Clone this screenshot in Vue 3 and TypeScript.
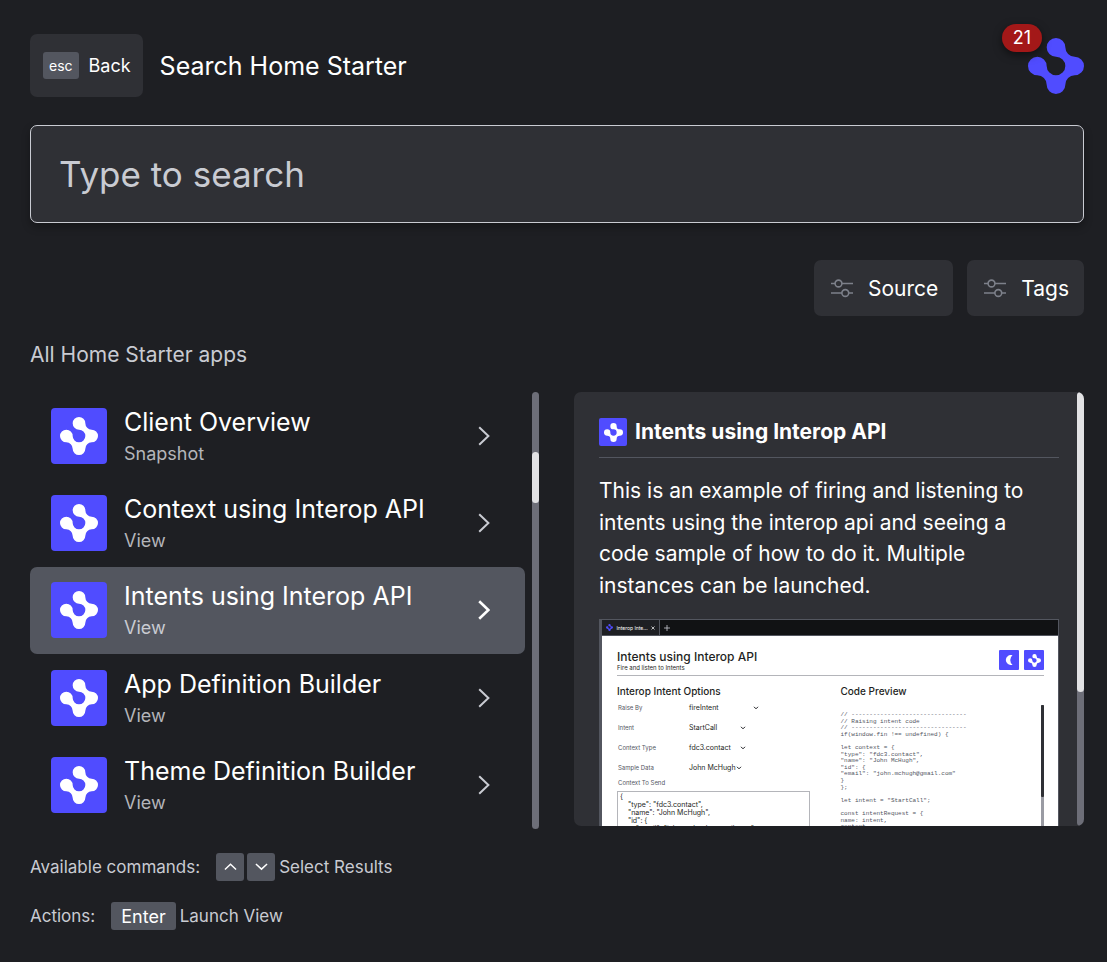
<script setup lang="ts">
import { computed, ref } from 'vue'

interface AppEntry {
  name: string
  kind: string
}

const LOGO =
  'M4 1A1 1 0 0 0 5 2A1 1 0 0 1 5 4A1 1 0 0 0 4 5A1 1 0 0 1 2 5A1 1 0 0 0 1 4A1 1 0 1 1 2 3A1 1 0 1 0 3 2A1 1 0 1 1 4 1Z'

const apps: AppEntry[] = [
  { name: 'Client Overview', kind: 'Snapshot' },
  { name: 'Context using Interop API', kind: 'View' },
  { name: 'Intents using Interop API', kind: 'View' },
  { name: 'App Definition Builder', kind: 'View' },
  { name: 'Theme Definition Builder', kind: 'View' },
]

const query = ref('')
const selected = ref(2)
const current = computed(() => apps[selected.value])
const filters = ['Source', 'Tags']

const options = [
  { label: 'Raise By', value: 'fireIntent', size: 'wide' },
  { label: 'Intent', value: 'StartCall', size: 'medium' },
  { label: 'Context Type', value: 'fdc3.contact', size: 'medium' },
  { label: 'Sample Data', value: 'John McHugh', size: 'narrow' },
]

const contextJson = `{
    "type": "fdc3.contact",
    "name": "John McHugh",
    "id": {
        "email": "john.mchugh@gmail.com"
    }
}`

const code = `// --------------------------------
// Raising intent code
// --------------------------------
if(window.fin !== undefined) {

let context = {
"type": "fdc3.contact",
"name": "John McHugh",
"id": {
"email": "john.mchugh@gmail.com"
}
};

let intent = "StartCall";

const intentRequest = {
name: intent,
context
};`
</script>

<template>
  <div class="page">
    <header class="header">
      <button class="back" type="button"><kbd class="esc">esc</kbd><span>Back</span></button>
      <h1 class="title">Search Home Starter</h1>
      <div class="brand">
        <svg class="brand-logo" viewBox="0 0 6 6" aria-hidden="true"><path :d="LOGO" /></svg>
        <span class="badge">21</span>
      </div>
    </header>

    <input v-model="query" class="search" type="text" placeholder="Type to search" aria-label="Type to search" />

    <div class="filters">
      <button v-for="f in filters" :key="f" class="filter" type="button">
        <svg class="sliders" viewBox="0 0 22 20" aria-hidden="true">
          <path d="M0 5.5H4M11 5.5H22M0 15H11M18 15H22" />
          <circle cx="7.5" cy="5.5" r="3.4" />
          <circle cx="14.3" cy="15" r="3.4" />
        </svg>
        <span>{{ f }}</span>
      </button>
    </div>

    <h2 class="caption">All Home Starter apps</h2>

    <main class="main">
      <section class="results">
        <div class="list">
          <button
            v-for="(app, i) in apps"
            :key="app.name"
            type="button"
            class="row"
            :class="{ active: i === selected }"
            @click="selected = i"
          >
            <span class="tile"><svg viewBox="0 0 6 6" aria-hidden="true"><path :d="LOGO" /></svg></span>
            <span class="row-text">
              <span class="row-name">{{ app.name }}</span>
              <span class="row-kind">{{ app.kind }}</span>
            </span>
            <svg class="chevron" viewBox="0 0 12 20" aria-hidden="true"><path d="M1.2 1.2L10.4 10L1.2 18.8" /></svg>
          </button>
        </div>
        <div class="track"><div class="thumb"></div></div>
      </section>

      <section class="detail">
        <div class="detail-body">
          <div class="detail-head">
            <span class="tile small"><svg viewBox="0 0 6 6" aria-hidden="true"><path :d="LOGO" /></svg></span>
            <h3 class="detail-title">{{ current.name }}</h3>
          </div>
          <p class="description">
            This is an example of firing and listening to intents using the interop api and seeing a code sample of how
            to do it. Multiple instances can be launched.
          </p>

          <div class="preview">
            <div class="tabs">
              <div class="tab">
                <svg class="tab-logo" viewBox="0 0 6 6" aria-hidden="true"><path :d="LOGO" /></svg>
                <span>Interop Inte...</span>
                <svg class="tab-close" viewBox="0 0 4 4" aria-hidden="true"><path d="M.5 .5L3.5 3.5M3.5 .5L.5 3.5" /></svg>
              </div>
              <svg class="tab-add" viewBox="0 0 6 6" aria-hidden="true"><path d="M3 0V6M0 3H6" /></svg>
            </div>
            <div class="sheet">
              <div class="sheet-head">
                <div>
                  <div class="sheet-title">Intents using Interop API</div>
                  <div class="sheet-sub">Fire and listen to Intents</div>
                </div>
                <div class="sheet-icons">
                  <span class="mini">
                    <svg class="moon" viewBox="0 0 8 10" aria-hidden="true"><path d="M7.5 .3A5 5 0 1 0 7.5 9.7A6 6 0 0 1 7.5 .3Z" /></svg>
                  </span>
                  <span class="mini"><svg viewBox="0 0 6 6" aria-hidden="true"><path :d="LOGO" /></svg></span>
                </div>
              </div>
              <div class="sheet-cols">
                <div>
                  <div class="sheet-h">Interop Intent Options</div>
                  <div v-for="o in options" :key="o.label" class="option">
                    <span class="option-label">{{ o.label }}</span>
                    <span class="option-value" :class="o.size">
                      {{ o.value }}
                      <svg class="caret" viewBox="0 0 6 4" aria-hidden="true"><path d="M1 .8L3 2.8L5 .8" /></svg>
                    </span>
                  </div>
                  <div class="option-label send">Context To Send</div>
                  <pre class="json">{{ contextJson }}</pre>
                </div>
                <div class="code-col">
                  <div class="sheet-h">Code Preview</div>
                  <div class="code-wrap">
                    <pre class="code">{{ code }}</pre>
                    <div class="mini-track"><div class="mini-thumb"></div></div>
                  </div>
                </div>
              </div>
            </div>
          </div>
        </div>
        <div class="track"><div class="thumb"></div></div>
      </section>
    </main>

    <footer class="footer">
      <div class="hint">
        <span class="hint-label">Available commands:</span>
        <kbd class="key arrow"><svg viewBox="0 0 14 8" aria-label="Up"><path d="M1 7L7 1.4L13 7" /></svg></kbd>
        <kbd class="key arrow"><svg viewBox="0 0 14 8" aria-label="Down"><path d="M1 1L7 6.6L13 1" /></svg></kbd>
        <span>Select Results</span>
      </div>
      <div class="hint">
        <span class="hint-label">Actions:</span>
        <kbd class="key">Enter</kbd>
        <span>Launch View</span>
      </div>
    </footer>
  </div>
</template>

<style>
body {
  margin: 0;
  background: #1e1f23;
}
</style>

<style scoped>
.page,
.page * {
  box-sizing: border-box;
}
.page {
  display: flex;
  flex-direction: column;
  height: 100vh;
  padding: 34px 23px 32px 30px;
  overflow: hidden;
  background: #1e1f23;
  color: #fff;
  font-family: Inter, 'Liberation Sans', sans-serif;
  font-size: 18px;
}
button,
kbd {
  font-family: inherit;
}
button {
  border: 0;
  color: #fff;
  cursor: pointer;
}
h1,
h2,
h3,
p,
pre {
  margin: 0;
}
.header {
  display: flex;
  align-items: center;
}
.back {
  display: flex;
  align-items: center;
  gap: 10px;
  height: 63px;
  padding: 0 12px 0 13px;
  border-radius: 7px;
  background: #2f3035;
  font-size: 18px;
}
.esc {
  padding: 0 6px;
  border-radius: 3px;
  background: #53565f;
  font-size: 14px;
  line-height: 27px;
}
.title {
  margin-left: 17px;
  font-size: 25px;
  font-weight: 400;
  line-height: 32px;
}
.brand {
  position: relative;
  width: 56px;
  height: 56px;
  margin-left: auto;
}
.brand-logo {
  display: block;
  fill: #504cff;
}
.badge {
  position: absolute;
  top: -14px;
  left: -26px;
  width: 40px;
  border-radius: 14px;
  background: #a31818;
  box-shadow: 0 3px 8px rgba(0, 0, 0, 0.5);
  font-size: 18px;
  line-height: 28px;
  text-align: center;
}
.search {
  width: 100%;
  height: 98px;
  flex: none;
  margin-top: 28px;
  padding: 0 28px;
  border: 1px solid #c9cbd2;
  border-radius: 7px;
  outline: 0;
  background: #2f3035;
  box-shadow: 0 4px 8px rgba(0, 0, 0, 0.3);
  color: #fff;
  font: 400 35px Inter, 'Liberation Sans', sans-serif;
}
.search::placeholder {
  color: #c9cbd2;
}
.filters {
  display: flex;
  justify-content: flex-end;
  gap: 14px;
  margin-top: 37px;
}
.filter {
  display: flex;
  align-items: center;
  gap: 15px;
  height: 56px;
  padding: 0 15px 0 17px;
  border-radius: 7px;
  background: #2f3035;
  font-size: 21px;
}
.sliders {
  width: 22px;
  height: 20px;
  fill: none;
  stroke: #7d808a;
  stroke-width: 1.6;
}
.caption {
  margin-top: 25px;
  color: #c9cbd2;
  font-size: 21px;
  font-weight: 400;
  line-height: 28px;
}
.main {
  display: grid;
  flex: 1;
  grid-template-columns: minmax(0, 509fr) minmax(0, 510fr);
  gap: 35px;
  min-height: 0;
  margin-top: 23px;
}
.results {
  display: flex;
  gap: 7px;
  min-height: 0;
}
.list {
  display: grid;
  flex: 1;
  grid-auto-rows: 1fr;
}
.row {
  display: flex;
  align-items: center;
  padding: 0 35px 0 21px;
  border-radius: 7px;
  background: transparent;
  text-align: left;
}
.row.active {
  background: #53565f;
}
.tile {
  display: grid;
  flex: none;
  place-items: center;
  width: 56px;
  height: 56px;
  border-radius: 4px;
  background: #504cff;
}
.tile svg {
  width: 38px;
  fill: #fff;
}
.tile.small {
  width: 28px;
  height: 28px;
  border-radius: 2px;
}
.tile.small svg {
  width: 19px;
}
.row-text {
  display: flex;
  flex: 1;
  flex-direction: column;
  margin-left: 17px;
}
.row-name {
  font-size: 25px;
  line-height: 36px;
}
.row-kind {
  color: #b4b5ba;
  font-size: 18px;
  line-height: 28px;
}
.chevron {
  width: 12px;
  height: 20px;
  fill: none;
  stroke: #c9cbd2;
  stroke-width: 2;
}
.active .row-kind {
  color: #c9cbd2;
}
.active .chevron {
  stroke: #fff;
  stroke-width: 2.6;
}
.track {
  display: flow-root;
  flex: none;
  width: 7px;
  border-radius: 4px;
  background: #6d6e78;
}
.thumb {
  height: 51px;
  margin-top: 60px;
  border-radius: 4px;
  background: #e2e2e4;
}
.detail {
  display: flex;
  min-height: 0;
  margin-bottom: 3px;
  overflow: hidden;
  border-radius: 7px;
  background: #2f3035;
}
.detail .thumb {
  height: 300px;
  margin-top: 0;
}
.detail-body {
  flex: 1;
  min-width: 0;
  padding: 26px 18px 0 25px;
}
.detail-head {
  display: flex;
  align-items: center;
  gap: 8px;
  padding-bottom: 11px;
  border-bottom: 1px solid #53565f;
}
.detail-title {
  font-size: 21px;
  font-weight: 700;
  line-height: 28px;
}
.description {
  margin-top: 17px;
  font-size: 21px;
  line-height: 1.5;
}
.preview {
  margin-top: 18px;
  border: 1px solid #53565f;
  border-left-width: 3px;
  color: #1e1f23;
  font-size: 6px;
}
.tabs {
  display: flex;
  align-items: center;
  height: 16px;
  border-bottom: 1px solid #53565f;
  background: #111214;
}
.tab {
  display: flex;
  align-items: center;
  justify-content: space-between;
  width: 58px;
  height: 15px;
  padding: 0 4px;
  border-right: 1px solid #53565f;
  background: #1e1f23;
  color: #fff;
  font-size: 5px;
}
.tab-logo {
  width: 7px;
  fill: #504cff;
}
.tab-close {
  width: 4px;
  stroke: #fff;
  stroke-width: 0.7;
}
.tab-add {
  width: 6px;
  margin-left: 4px;
  stroke: #c9cbd2;
  stroke-width: 0.8;
}
.sheet {
  height: 260px;
  padding: 14px 14px 0 15px;
  background: #fff;
}
.sheet-head {
  display: flex;
  justify-content: space-between;
  height: 26px;
  border-bottom: 1px solid #b4b5ba;
}
.sheet-title {
  font-size: 12px;
  font-weight: 500;
  line-height: 14px;
}
.sheet-sub {
  line-height: 8px;
}
.sheet-icons {
  display: flex;
  gap: 5px;
}
.mini {
  display: grid;
  place-items: center;
  width: 20px;
  height: 20px;
  border-radius: 1px;
  background: #504cff;
}
.mini svg {
  width: 13px;
  fill: #fff;
}
.mini .moon {
  width: 8px;
}
.sheet-cols {
  display: grid;
  grid-template-columns: minmax(0, 193fr) minmax(0, 204fr);
  gap: 31px;
  margin-top: 8px;
}
.sheet-h {
  margin-bottom: 5px;
  font-size: 10px;
  font-weight: 500;
  line-height: 14px;
}
.option {
  display: grid;
  grid-template-columns: 71px auto;
  justify-content: start;
  padding: 1px 1px 11px;
  line-height: 8px;
}
.option-label {
  color: #53565f;
}
.option-value {
  display: flex;
  align-items: center;
  justify-content: space-between;
  font-size: 7px;
  white-space: nowrap;
}
.option-value.wide {
  width: 70px;
}
.option-value.medium {
  width: 57px;
}
.option-value.narrow {
  width: 51px;
}
.caret {
  flex: none;
  width: 6px;
  height: 4px;
  fill: none;
  stroke: #1e1f23;
}
.send {
  margin: -4px 0 4px 1px;
  line-height: 8px;
}
.json {
  padding: 1px 2px;
  border: 1px solid #b4b5ba;
  font: 7px/8px Inter, 'Liberation Sans', sans-serif;
}
.code-wrap {
  display: flex;
  justify-content: space-between;
  padding-top: 2px;
}
.code {
  margin-top: 7px;
  color: #53565f;
  font-family: 'Liberation Mono', monospace;
  font-size: 6px;
  line-height: 1.1;
}
.mini-track {
  width: 3px;
  height: 200px;
  background: #9a9ba3;
}
.mini-thumb {
  height: 92px;
  border-radius: 1px;
  background: #2f3035;
}
.footer {
  display: flex;
  flex: none;
  flex-direction: column;
  gap: 21px;
  margin-top: 24px;
  color: #c9cbd2;
  font-size: 17px;
}
.hint {
  display: flex;
  align-items: center;
  gap: 4px;
  height: 28px;
}
.hint-label {
  margin-right: 12px;
}
.key {
  display: grid;
  place-items: center;
  height: 28px;
  padding: 0 10px;
  border-radius: 3px;
  background: #53565f;
  color: #fff;
  font-size: 18px;
}
.arrow {
  width: 28px;
  padding: 0;
}
.arrow + .arrow {
  margin-left: -1px;
}
.arrow svg {
  width: 13px;
  fill: none;
  stroke: #fff;
  stroke-width: 1.6;
}
</style>
